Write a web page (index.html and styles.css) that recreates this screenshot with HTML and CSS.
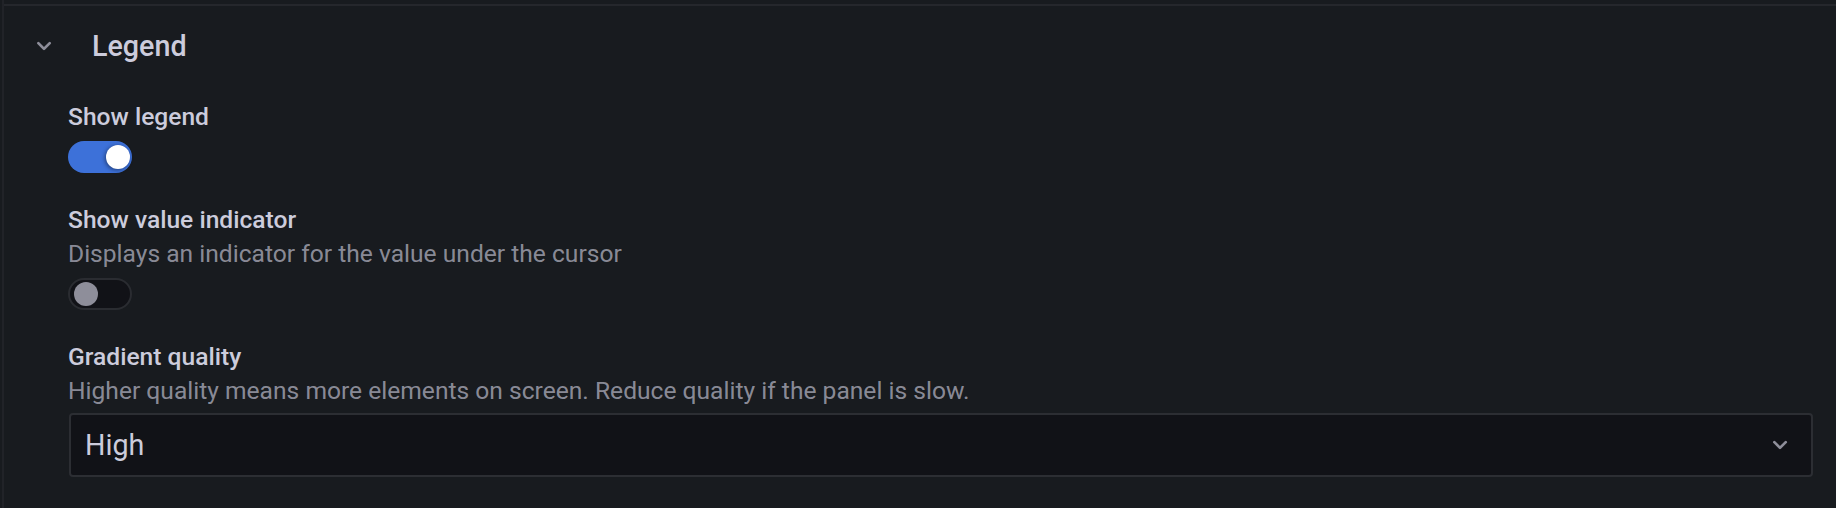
FILE: index.html
```html
<!DOCTYPE html>
<html>
<head>
<meta charset="utf-8">
<link rel="stylesheet" href="styles.css">
</head>
<body>
<div class="pane">
  <div class="category">
    <div class="header">
      <svg class="chev" viewBox="0 0 24 24" width="32" height="32"><path fill="currentColor" d="M17,9.17a1,1,0,0,0-1.41,0L12,12.71,8.46,9.170a1,1,0,0,0-1.41,0,1,1,0,0,0,0,1.42l4.24,4.24a1,1,0,0,0,1.42,0L17,10.59A1,1,0,0,0,17,9.17Z"/></svg>
      <div class="title">Legend</div>
    </div>
    <div class="body">
      <div class="field">
        <div class="label">Show legend</div>
        <div class="switch on"><span class="knob"></span></div>
      </div>
      <div class="field">
        <div class="label">Show value indicator</div>
        <div class="desc">Displays an indicator for the value under the cursor</div>
        <div class="switch off"><span class="knob"></span></div>
      </div>
      <div class="field">
        <div class="label">Gradient quality</div>
        <div class="desc">Higher quality means more elements on screen. Reduce quality if the panel is slow.</div>
        <div class="select">
          <span class="value">High</span>
          <svg class="chev sel-chev" viewBox="0 0 24 24" width="32" height="32"><path fill="currentColor" d="M17,9.17a1,1,0,0,0-1.41,0L12,12.71,8.46,9.17a1,1,0,0,0-1.41,0,1,1,0,0,0,0,1.42l4.24,4.240a1,1,0,0,0,1.42,0L17,10.59A1,1,0,0,0,17,9.17Z"/></svg>
        </div>
      </div>
    </div>
  </div>
</div>
</body>
</html>
```
FILE: styles.css
```css
html, body {
  margin: 0;
  padding: 0;
  background: #181b1f;
  height: 100%;
}
body {
  font-family: Roboto, "Liberation Sans", sans-serif;
  color: #ccccdc;
  overflow: hidden;
}
.pane {
  margin-left: 2px;
  border-left: 2px solid #212328;
  height: 100%;
  padding-top: 4px;
}
.category {
  border-top: 2px solid #25272c;
}
.header {
  display: flex;
  align-items: center;
  height: 60px;
  padding-left: 24px;
  padding-top: 10px;
}
.chev {
  color: #8e8e9a;
  display: block;
}
.title {
  margin-left: 32px;
  font-size: 28.7px;
  font-weight: 500;
  line-height: 40px;
}
.body {
  padding: 25px 23px 0 64px;
}
.field {
  margin-bottom: 31px;
}
.label {
  font-size: 24.6px;
  font-weight: 500;
  line-height: 32px;
}
.desc {
  font-size: 24.6px;
  line-height: 32px;
  margin-top: 2px;
  color: rgba(204, 204, 220, 0.65);
}
.switch {
  margin-top: 8px;
  width: 64px;
  height: 32px;
  border-radius: 16px;
  box-sizing: border-box;
  position: relative;
}
.switch.on {
  background: #3d71d9;
}
.switch.off {
  background: #111217;
  border: 2px solid #2a2c31;
}
.knob {
  position: absolute;
  width: 24px;
  height: 24px;
  border-radius: 50%;
  top: 4px;
}
.on .knob {
  left: 38px;
  background: #ffffff;
  box-shadow: -1px 1px 4px rgba(0, 0, 0, 0.45);
}
.off .knob {
  left: 4px;
  top: 2px;
  background: #8e8e9a;
}
.select {
  margin-top: 6px;
  margin-left: 1px;
  height: 64px;
  box-sizing: border-box;
  border: 2px solid #2c2e33;
  border-radius: 4px;
  background: #111217;
  display: flex;
  align-items: center;
  padding: 0 15px 0 14px;
}
.value {
  flex: 1;
  font-size: 28.7px;
  line-height: 32px;
  color: #ccccdc;
}
```
